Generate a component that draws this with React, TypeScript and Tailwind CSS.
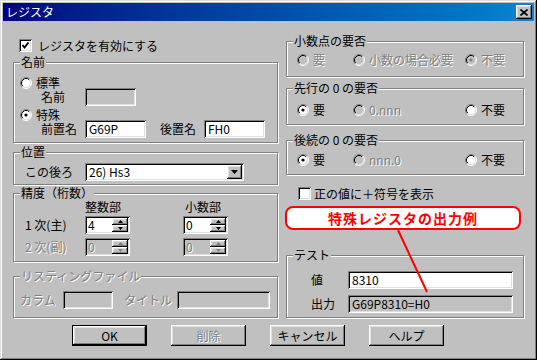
import type { ReactNode } from "react";

const raised =
  "shadow-[inset_-1px_-1px_0_#000000,inset_1px_1px_0_#ffffff,inset_-2px_-2px_0_#808080,inset_2px_2px_0_#dfdfdf]";
const sunken =
  "shadow-[inset_1px_1px_0_#808080,inset_-1px_-1px_0_#ffffff,inset_2px_2px_0_#000000,inset_-2px_-2px_0_#dfdfdf]";
const dim = "text-[#808080] [text-shadow:1px_1px_0_#ffffff]";

function Radio({ checked, disabled }: { checked?: boolean; disabled?: boolean }) {
  return (
    <svg width="12" height="12" viewBox="0 0 12 12" className="shrink-0">
      <circle cx="6" cy="6" r="5" fill={disabled ? "#c0c0c0" : "#ffffff"} />
      <path d="M2.11 9.89 A5.5 5.5 0 0 1 9.89 2.11" fill="none" stroke="#808080" />
      <path d="M9.89 2.11 A5.5 5.5 0 0 1 2.11 9.89" fill="none" stroke="#ffffff" />
      <path d="M2.82 9.18 A4.5 4.5 0 0 1 9.18 2.82" fill="none" stroke="#000000" />
      <path d="M9.18 2.82 A4.5 4.5 0 0 1 2.82 9.18" fill="none" stroke="#dfdfdf" />
      {checked && <circle cx="6" cy="6" r="1.6" fill={disabled ? "#808080" : "#000000"} />}
    </svg>
  );
}

function Check({ checked }: { checked?: boolean }) {
  return (
    <div className={`h-[13px] w-[13px] shrink-0 bg-white ${sunken}`}>
      {checked && (
        <svg width="13" height="13" viewBox="0 0 13 13">
          <polyline points="3.5,6 5.5,8.5 9.5,3.5" fill="none" stroke="#000" strokeWidth="2" />
        </svg>
      )}
    </div>
  );
}

function Opt({ label, checked, disabled, w }: { label: string; checked?: boolean; disabled?: boolean; w: string }) {
  return (
    <div className={`flex h-[12px] items-center gap-[4px] ${w}`}>
      <Radio checked={checked} disabled={disabled} />
      <span className={`leading-[12px] ${disabled ? dim : ""}`}>{label}</span>
    </div>
  );
}

function Group({ label, disabled, className, children }: { label: string; disabled?: boolean; className: string; children: ReactNode }) {
  return (
    <div className={`relative flex flex-col border border-[#808080] shadow-[inset_1px_1px_0_#ffffff,1px_1px_0_#ffffff] ${className}`}>
      <span className={`absolute left-[6px] top-[-8px] bg-[#c0c0c0] px-[1px] ${disabled ? dim : ""}`}>{label}</span>
      {children}
    </div>
  );
}

function Field({ value, w, gray }: { value?: string; w: string; gray?: boolean }) {
  return (
    <div className={`h-[18px] pl-[4px] pt-[2px] ${w} ${sunken} ${gray ? "bg-[#c0c0c0]" : "bg-white"}`}>{value}</div>
  );
}

function Spin({ value, disabled }: { value: string; disabled?: boolean }) {
  const arrow = disabled ? "#808080" : "#000000";
  return (
    <div className={`flex h-[18px] w-[45px] p-[2px] ${sunken} ${disabled ? "bg-[#c0c0c0]" : "bg-white"}`}>
      <div className={`flex-1 pl-[1px] ${disabled ? dim : ""}`}>{value}</div>
      <div className="flex w-[16px] flex-col bg-[#c0c0c0]">
        <div className={`flex flex-1 items-center justify-center ${raised}`}>
          <svg width="5" height="3" viewBox="0 0 5 3"><path d="M2.5 0 L5 3 L0 3 Z" fill={arrow} /></svg>
        </div>
        <div className={`flex flex-1 items-center justify-center ${raised}`}>
          <svg width="5" height="3" viewBox="0 0 5 3"><path d="M0 0 L5 0 L2.5 3 Z" fill={arrow} /></svg>
        </div>
      </div>
    </div>
  );
}

function Button({ label, isDefault, disabled }: { label: string; isDefault?: boolean; disabled?: boolean }) {
  return (
    <div className={`h-[21px] w-[75px] bg-[#c0c0c0] ${isDefault ? "border border-black" : ""}`}>
      <div className={`flex h-full w-full items-center justify-center ${raised} ${disabled ? dim : ""}`}>{label}</div>
    </div>
  );
}

export default function App() {
  return (
    <div className="relative h-[360px] w-[537px] overflow-hidden bg-[#c0c0c0] font-['Noto_Sans_CJK_JP',sans-serif] text-[12px] leading-[14px] text-black shadow-[inset_-1px_-1px_0_#000000,inset_1px_1px_0_#dfdfdf,inset_-2px_-2px_0_#808080,inset_2px_2px_0_#ffffff]">
      {/* title bar */}
      <div className="mx-[3px] mt-[3px] flex h-[18px] items-center bg-linear-to-r from-[#000080] to-[#1084d0] pl-[3px] pr-[2px]">
        <span className="flex-1 text-white">レジスタ</span>
        <div className={`flex h-[14px] w-[16px] items-center justify-center bg-[#c0c0c0] ${raised}`}>
          <svg width="8" height="7" viewBox="0 0 8 7">
            <path d="M0.5 0.5 L7.5 6.5 M7.5 0.5 L0.5 6.5" stroke="#000" strokeWidth="1.6" />
          </svg>
        </div>
      </div>

      <div className="flex pl-[13px]">
        {/* left column */}
        <div className="flex w-[265px] flex-col">
          <div className="ml-[6px] mt-[18px] flex h-[13px] items-center gap-[6px]">
            <Check checked />
            <span>レジスタを有効にする</span>
          </div>

          <Group label="名前" className="mt-[10px] h-[81px]">
            <div className="ml-[6px] mt-[14px] flex h-[12px]">
              <Opt label="標準" w="" />
            </div>
            <div className="mt-[-1px] flex h-[17px] items-center">
              <span className="ml-[27px] w-[44px] leading-[12px]">名前</span>
              <Field w="w-[51px]" gray />
            </div>
            <div className="ml-[6px] mt-[4px] flex h-[12px]">
              <Opt label="特殊" checked w="" />
            </div>
            <div className="mt-[-1px] flex h-[17px] items-center">
              <span className="ml-[27px] w-[44px] leading-[12px]">前置名</span>
              <Field w="w-[61px]" value="G69P" />
              <span className="ml-[14px] w-[44px] leading-[12px]">後置名</span>
              <Field w="w-[61px]" value="FH0" />
            </div>
          </Group>

          <Group label="位置" className="mt-[9px] h-[33px]">
            <div className="mt-[10px] flex h-[18px] items-center">
              <span className="ml-[11px] w-[60px]">この後ろ</span>
              <div className={`flex h-[18px] w-[159px] bg-white p-[2px] ${sunken}`}>
                <span className="flex-1 pl-[2px]">26) Hs3</span>
                <div className={`flex w-[15px] items-center justify-center bg-[#c0c0c0] ${raised}`}>
                  <svg width="7" height="4" viewBox="0 0 7 4"><path d="M0 0 L7 0 L3.5 4 Z" fill="#000" /></svg>
                </div>
              </div>
            </div>
          </Group>

          <Group label="精度（桁数）" className="mt-[8px] h-[69px]">
            <div className="mt-[6px] flex h-[14px]">
              <span className="ml-[71px] w-[100px]">整数部</span>
              <span>小数部</span>
            </div>
            <div className="mt-[2px] flex h-[18px] items-center">
              <span className="ml-[11px] w-[60px]">1 次(主)</span>
              <Spin value="4" />
              <div className="ml-[53px]"><Spin value="0" /></div>
            </div>
            <div className="mt-[4px] flex h-[18px] items-center">
              <span className={`ml-[11px] w-[60px] ${dim}`}>2 次(副)</span>
              <Spin value="0" disabled />
              <div className="ml-[53px]"><Spin value="0" disabled /></div>
            </div>
          </Group>

          <Group label="リスティングファイル" disabled className="mt-[14px] h-[42px]">
            <div className="mt-[14px] flex h-[18px] items-center">
              <span className={`ml-[6px] w-[43px] ${dim}`}>カラム</span>
              <Field w="w-[50px]" gray />
              <span className={`ml-[11px] w-[53px] ${dim}`}>タイトル</span>
              <Field w="w-[93px]" gray />
            </div>
          </Group>
        </div>

        {/* right column */}
        <div className="ml-[8px] flex w-[238px] flex-col">
          <Group label="小数点の要否" className="mt-[20px] h-[36px]">
            <div className="ml-[10px] mt-[12px] flex h-[12px]">
              <Opt label="要" disabled w="w-[56px]" />
              <Opt label="小数の場合必要" disabled w="w-[112px]" />
              <Opt label="不要" disabled checked w="" />
            </div>
          </Group>

          <Group label="先行の 0 の要否" className="mt-[11px] h-[37px]">
            <div className="ml-[10px] mt-[15px] flex h-[12px]">
              <Opt label="要" checked w="w-[56px]" />
              <Opt label="0.nnn" disabled w="w-[112px]" />
              <Opt label="不要" w="" />
            </div>
          </Group>

          <Group label="後続の 0 の要否" className="mt-[15px] h-[35px]">
            <div className="ml-[10px] mt-[13px] flex h-[12px]">
              <Opt label="要" checked w="w-[56px]" />
              <Opt label="nnn.0" disabled w="w-[112px]" />
              <Opt label="不要" w="" />
            </div>
          </Group>

          <div className="ml-[12px] mt-[12px] flex h-[13px] items-center gap-[3px]">
            <Check />
            <span>正の値に＋符号を表示</span>
          </div>

          <div className="ml-[-1px] mt-[6px] flex h-[24px] w-[236px] items-center justify-center rounded-[8px] border-2 border-[#ff0000] bg-white text-[14px] font-bold tracking-[1px] text-[#ff0000]">
            特殊レジスタの出力例
          </div>

          <Group label="テスト" className="mt-[25px] h-[63px]">
            <div className="mt-[15px] flex h-[18px] items-center">
              <span className="ml-[24px] w-[37px]">値</span>
              <Field w="w-[165px]" value="8310" />
            </div>
            <div className="mt-[6px] flex h-[18px] items-center">
              <span className="ml-[24px] w-[37px]">出力</span>
              <Field w="w-[165px]" value="G69P8310=H0" gray />
            </div>
          </Group>
        </div>
      </div>

      <div className="mt-[7px] flex gap-[24px] pl-[72px]">
        <Button label="OK" isDefault />
        <Button label="削除" disabled />
        <Button label="キャンセル" />
        <Button label="ヘルプ" />
      </div>

      {/* callout pointer */}
      <svg className="pointer-events-none absolute left-0 top-0" width="537" height="360">
        <line x1="398" y1="230" x2="427" y2="292" stroke="#ff0000" strokeWidth="2" />
      </svg>
    </div>
  );
}
